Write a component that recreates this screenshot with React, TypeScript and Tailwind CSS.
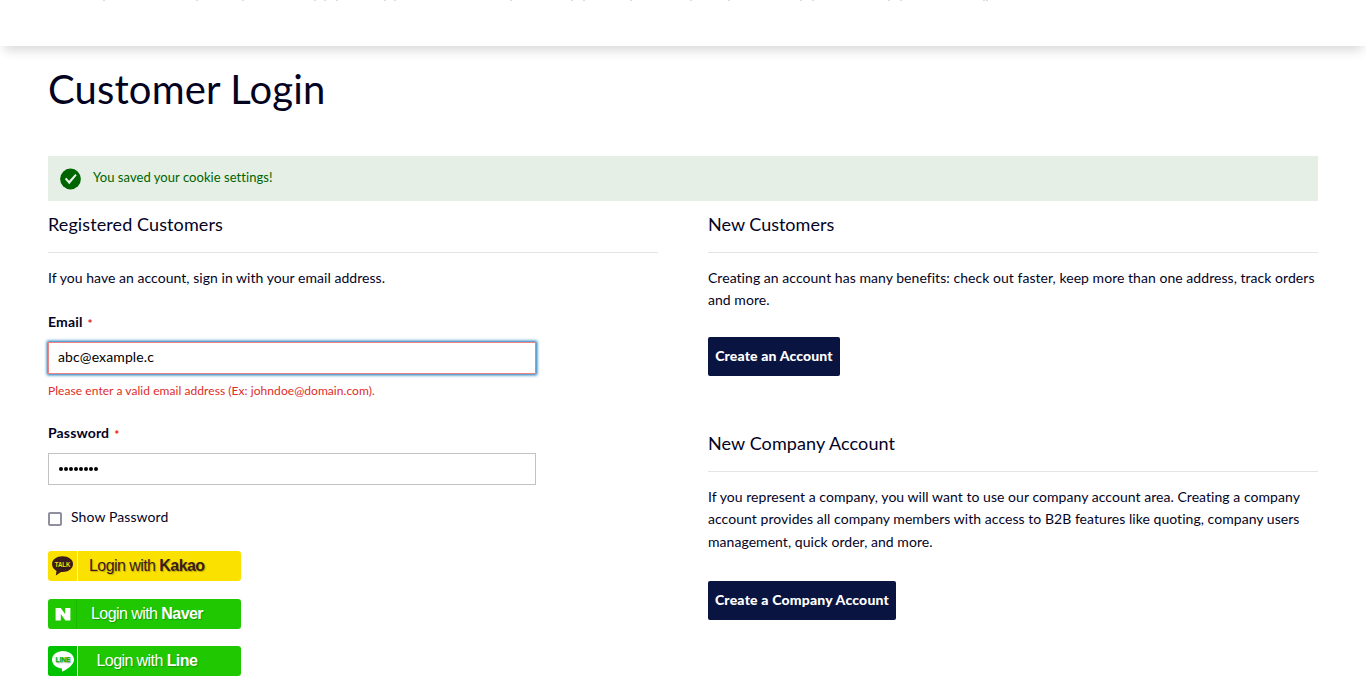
import React from "react";

const marks = [104, 197, 243, 315, 325, 337, 385, 395, 511, 572, 584, 631, 691, 729, 801, 813, 889, 901, 984, 987];

function Heading({ children, spacing }: { children: React.ReactNode; spacing: string }) {
  return (
    <h2 className="h-[41px] border-b border-[#e4e4e6] text-[18px] leading-[25px]">
      <span className={spacing}>{children}</span>
    </h2>
  );
}

function Label({ children }: { children: React.ReactNode }) {
  return (
    <label className="flex h-[20px] items-center gap-[5px] text-[14px] font-bold leading-[20px] tracking-[0.15px]">
      <span>{children}</span>
      <span className="pt-[3px] text-[12px] font-black text-[#e02b27]">*</span>
    </label>
  );
}

function KakaoIcon() {
  return (
    <svg viewBox="0 0 30 30" className="h-[30px] w-[30px] shrink-0">
      <path d="M14.500 5.300C8.700 5.300 4.100 8.500 4.100 13c0 3 1.600 5.400 4.400 6.900L7.800 24.600l5.200-3.700c.5.1 1 .1 1.500.1C20.400 21 25 17.500 25 13S20.400 5.300 14.500 5.300z" fill="#3b1c1c" />
      <text x="14.600" y="15.700" textAnchor="middle" fontSize="7" fontWeight="700" fontFamily="Liberation Sans" fill="#fae100" textLength="15.500" lengthAdjust="spacingAndGlyphs">TALK</text>
      <path d="M29.500 0v30" stroke="#fffbd0" />
    </svg>
  );
}

function NaverIcon() {
  return (
    <svg viewBox="0 0 30 30" className="h-[30px] w-[30px] shrink-0">
      <path d="M7.600 9h5.200l4.400 6.300V9h5.200v12.500h-5l-4.600-6.600v6.600H7.600z" fill="#fff" />
      <path d="M28.500 0v30" stroke="#1bb400" strokeOpacity="0.8" />
    </svg>
  );
}

function LineIcon() {
  return (
    <svg viewBox="0 0 30 30" className="h-[30px] w-[30px] shrink-0">
      <path d="M3 0h26v30H3a3 3 0 0 1-3-3V3a3 3 0 0 1 3-3z" fill="#00c300" />
      <path d="M15 5C9 5 4 8.800 4 13.700c0 4.400 3.900 7.900 9 8.600 1 .2 1.200.8 1 1.800-.2 1.200 0 1.800 1.100 1.200C18.500 23.600 26 19 26 13.700 26 8.800 21 5 15 5z" fill="#fff" />
      <text x="15" y="16.300" textAnchor="middle" fontSize="7.500" fontWeight="700" fontFamily="Liberation Sans" fill="#00b900" stroke="#00b900" strokeWidth="0.250" textLength="15" lengthAdjust="spacingAndGlyphs">LINE</text>
      <path d="M29.500 0v30" stroke="#fff" />
    </svg>
  );
}

export default function App() {
  return (
    <div className="h-[683px] w-full overflow-hidden bg-white text-[14px] text-[#03031f] [font-family:Lato,'Open_Sans',sans-serif]">
      <header className="h-[46px] bg-white shadow-[0_8px_12px_-4px_rgba(0,0,0,0.16)]">
        <svg className="block h-px w-full">
          {marks.map((x) => (
            <rect key={x} x={x - 1} y="0" width="2" height="1" fill="#dcdce0" />
          ))}
        </svg>
      </header>
      <main className="px-12 pt-[13px]">
        <h1 className="h-[60px] text-[40px] leading-[60px] tracking-[0.15px]">Customer Login</h1>
        <div className="mt-[37px] flex h-[45px] items-center gap-3 bg-[#e5efe5] px-3 text-[13px] text-[#006400]">
          <svg viewBox="0 0 22 22" className="h-[22px] w-[21px]">
            <circle cx="11" cy="11" r="10.900" fill="#006400" />
            <path d="M5 11l1.800-1.200 2.700 3L16 5.800l1.500 1.300-7.800 9.500z" fill="#e5efe5" />
          </svg>
          <span className="pb-[2px] tracking-[0.05px]">You saved your cookie settings!</span>
        </div>
        <div className="grid grid-cols-[610px_610px] justify-between pt-[11px]">
          <section>
            <Heading spacing="tracking-[0.1px]">Registered Customers</Heading>
            <p className="mt-[14px] leading-[22px] tracking-[0.04px]">If you have an account, sign in with your email address.</p>
            <div className="mt-[23px]"><Label>Email</Label></div>
            <input
              defaultValue="abc@example.c"
              className="mt-[10px] block h-[32px] w-[488px] border border-[#ed8380] px-[9px] pb-[3px] text-[14px] tracking-[0.12px] text-black shadow-[0_0_3px_1px_#006bb4] outline-none"
            />
            <p className="mt-[8px] h-[18px] text-[12px] leading-[18px] tracking-[0.06px] text-[#e02b27]">Please enter a valid email address (Ex: johndoe@domain.com).</p>
            <div className="mt-[23px]"><Label>Password</Label></div>
            <div className="mt-[10px] flex h-[32px] w-[488px] items-center gap-px border border-[#c2c2c2] px-[10px]">
              {[0, 1, 2, 3, 4, 5, 6, 7].map((n) => (
                <span key={n} className="h-1 w-1 rounded-full bg-black" />
              ))}
            </div>
            <div className="mt-[22px] flex h-[22px] items-center gap-[9px]">
              <span className="mt-[2px] h-[14px] w-[14px] rounded-[2px] border-2 border-[#8f8f9d]" />
              <span className="pb-[3px] tracking-[0.1px]">Show Password</span>
            </div>
            <div className="mt-[22px] flex flex-col text-[16px] [font-family:'Liberation_Sans',sans-serif]">
              <button className="flex h-[30px] w-[193px] items-center rounded-[3px] bg-[#fae100] text-[#3b1c1c] [text-shadow:1px_1px_1px_rgba(0,0,0,0.25)]">
                <KakaoIcon />
                <span className="ml-[11px] tracking-[-0.56px]">Login with <b>Kakao</b></span>
              </button>
              <button className="mt-[18px] flex h-[30px] w-[193px] items-center rounded-[3px] bg-[#1fc800] text-white [text-shadow:1px_1px_1px_rgba(0,0,0,0.25)]">
                <NaverIcon />
                <span className="ml-[13px] tracking-[-0.56px]">Login with <b>Naver</b></span>
              </button>
              <button className="mt-[17px] flex h-[30px] w-[193px] items-center rounded-[3px] bg-[#1fc800] text-white [text-shadow:1px_1px_1px_rgba(0,0,0,0.25)]">
                <LineIcon />
                <span className="ml-[18.500px] tracking-[-0.58px]">Login with <b>Line</b></span>
              </button>
            </div>
          </section>
          <section>
            <Heading spacing="tracking-[0px]">New Customers</Heading>
            <p className="mt-[14px] whitespace-nowrap leading-[22px] tracking-[0.045px]">
              Creating an account has many benefits: check out faster, keep more than one address, track orders
              <br />
              and more.
            </p>
            <button className="mt-[26px] block h-[39px] w-[132px] whitespace-nowrap rounded-[2px] bg-[#0a1440] pb-[2px] text-[14px] font-black tracking-[0.15px] text-white">Create an Account</button>
            <div className="mt-[55px]">
              <Heading spacing="tracking-[0.1px]">New Company Account</Heading>
            </div>
            <p className="mt-[14px] whitespace-nowrap leading-[22.4px] tracking-[0.045px]">
              If you represent a company, you will want to use our company account area. Creating a company
              <br />
              account provides all company members with access to B2B features like quoting, company users
              <br />
              management, quick order, and more.
            </p>
            <button className="mt-[28px] block h-[39px] w-[188px] whitespace-nowrap rounded-[2px] bg-[#0a1440] pb-[2px] text-[14px] font-black tracking-[0.2px] text-white">Create a Company Account</button>
          </section>
        </div>
      </main>
    </div>
  );
}
